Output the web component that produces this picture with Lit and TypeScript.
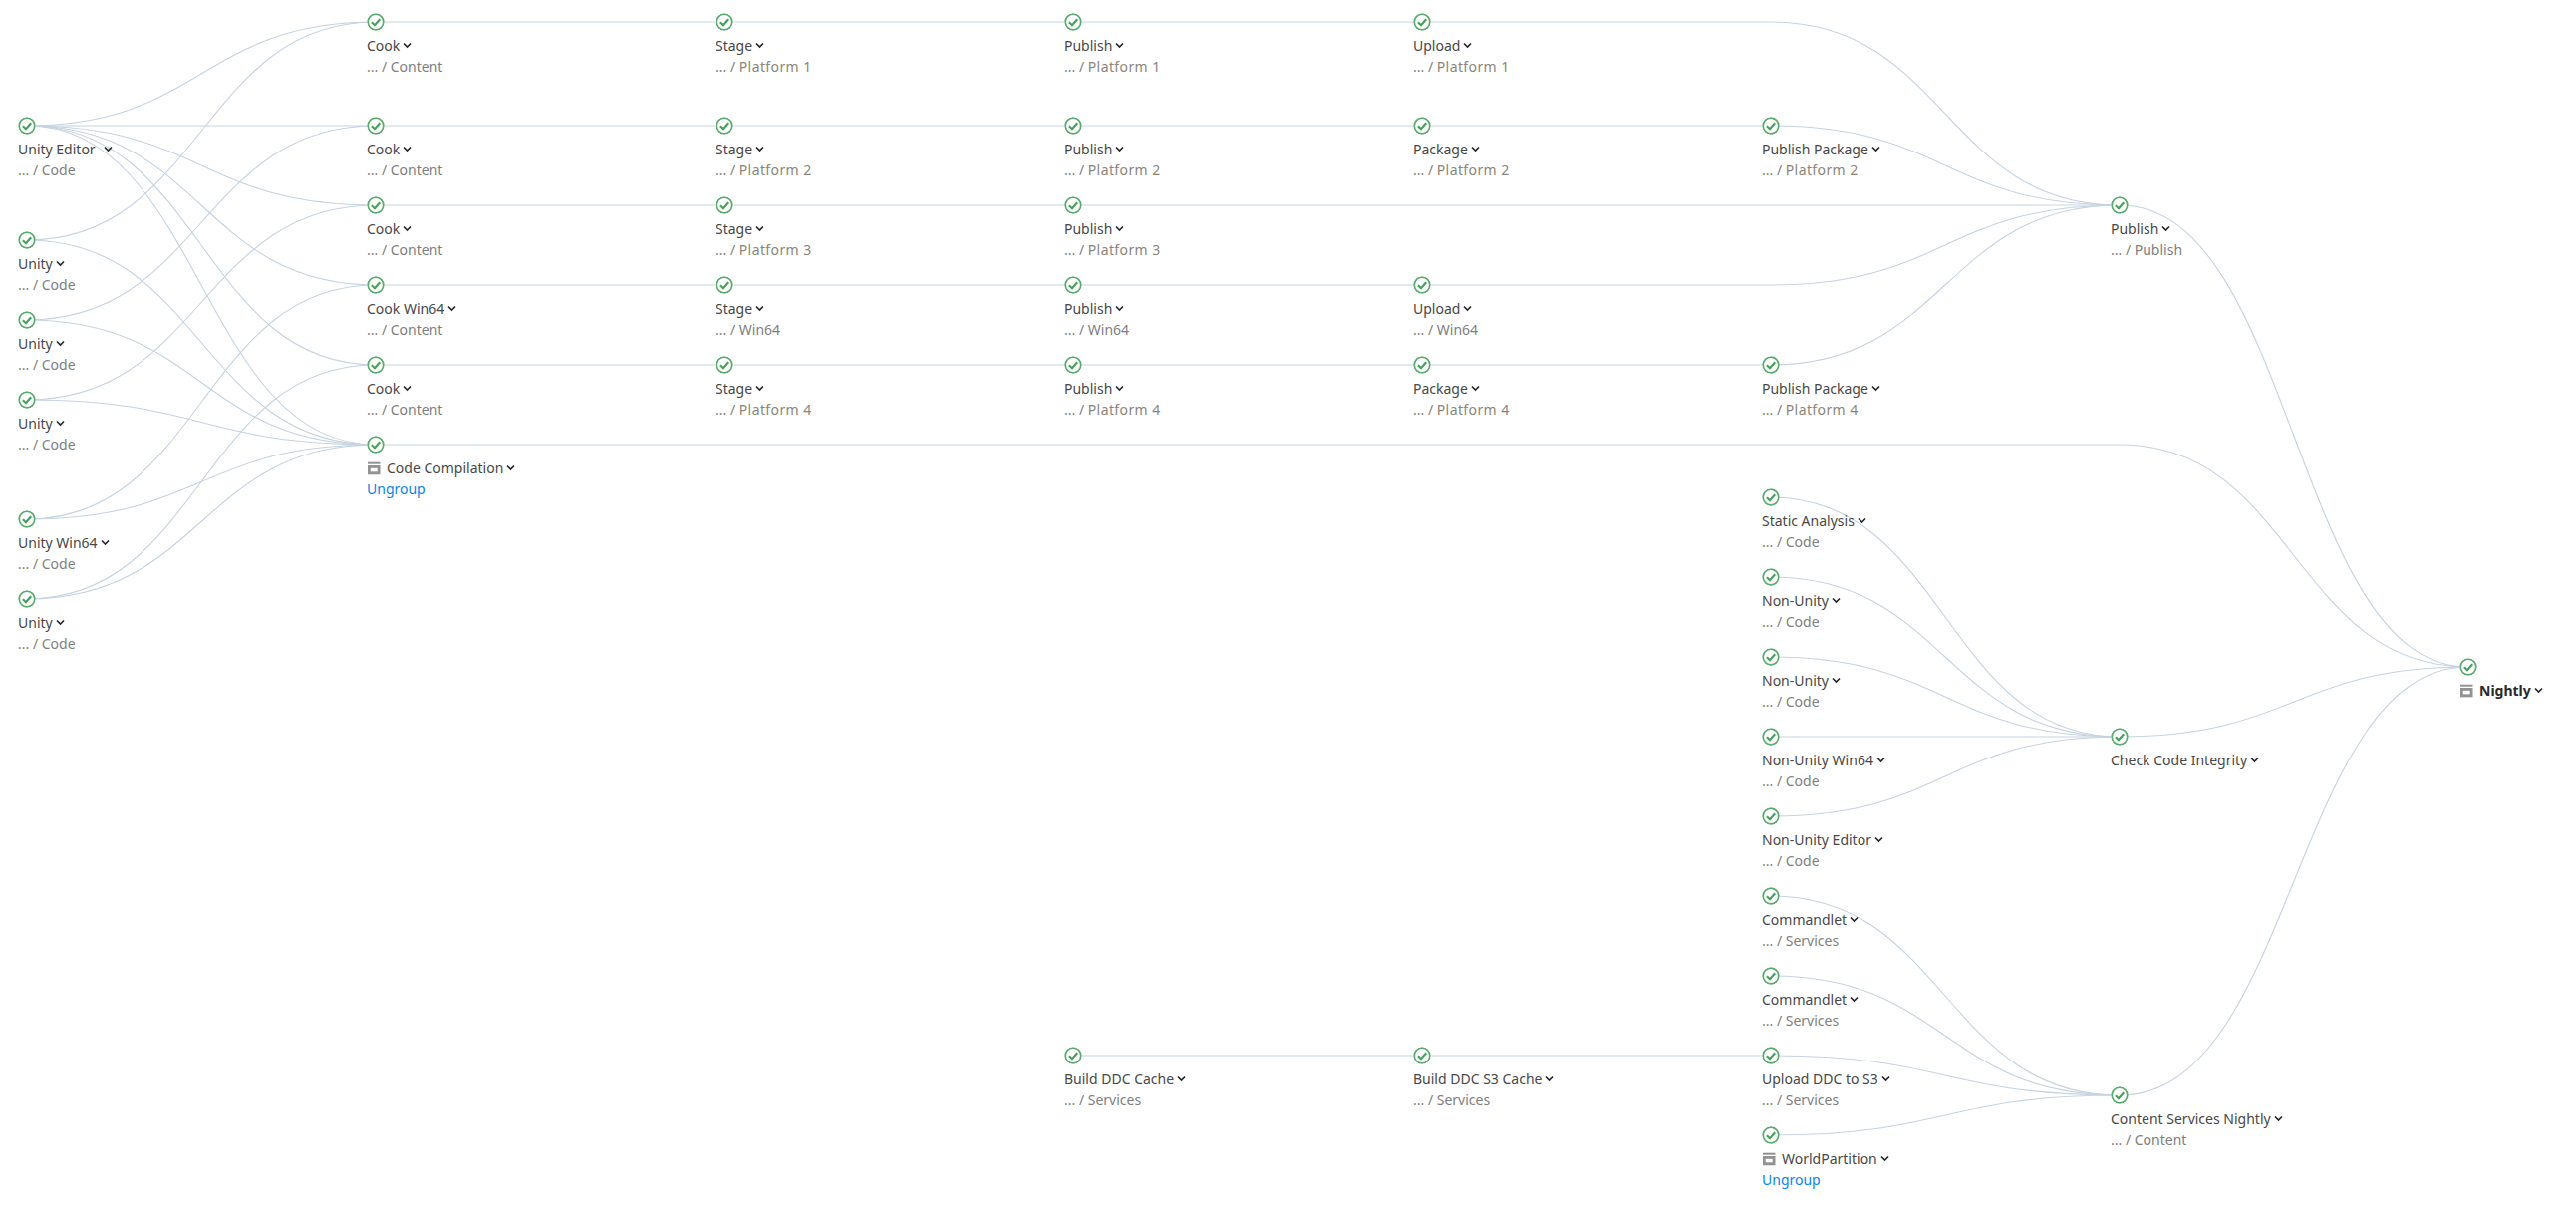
import { LitElement, html, css, svg } from "lit";
import { customElement } from "lit/decorators.js";

const COL0 = 27, COLW = 350;
type N = { id: string; c: number; y: number; t: string; s?: string; p?: string; g?: boolean; b?: boolean; w?: boolean };
const nodes: N[] = [
  { id: "ue", c: 0, y: 126, t: "Unity Editor", s: "Code", w: true },
  { id: "u1", c: 0, y: 241, t: "Unity", s: "Code" },
  { id: "u2", c: 0, y: 321, t: "Unity", s: "Code" },
  { id: "u3", c: 0, y: 401, t: "Unity", s: "Code" },
  { id: "uw", c: 0, y: 521, t: "Unity Win64", s: "Code" },
  { id: "u4", c: 0, y: 601, t: "Unity", s: "Code" },
  { id: "c1", c: 1, y: 22, t: "Cook", s: "Content" },
  { id: "c2", c: 1, y: 126, t: "Cook", s: "Content" },
  { id: "c3", c: 1, y: 206, t: "Cook", s: "Content" },
  { id: "cw", c: 1, y: 286, t: "Cook Win64", s: "Content" },
  { id: "c4", c: 1, y: 366, t: "Cook", s: "Content" },
  { id: "cc", c: 1, y: 446, t: "Code Compilation", g: true },
  { id: "s1", c: 2, y: 22, t: "Stage", p: "Platform 1" },
  { id: "s2", c: 2, y: 126, t: "Stage", p: "Platform 2" },
  { id: "s3", c: 2, y: 206, t: "Stage", p: "Platform 3" },
  { id: "sw", c: 2, y: 286, t: "Stage", s: "Win64" },
  { id: "s4", c: 2, y: 366, t: "Stage", p: "Platform 4" },
  { id: "p1", c: 3, y: 22, t: "Publish", p: "Platform 1" },
  { id: "p2", c: 3, y: 126, t: "Publish", p: "Platform 2" },
  { id: "p3", c: 3, y: 206, t: "Publish", p: "Platform 3" },
  { id: "pw", c: 3, y: 286, t: "Publish", s: "Win64" },
  { id: "p4", c: 3, y: 366, t: "Publish", p: "Platform 4" },
  { id: "dc", c: 3, y: 1059, t: "Build DDC Cache", s: "Services" },
  { id: "up1", c: 4, y: 22, t: "Upload", p: "Platform 1" },
  { id: "k2", c: 4, y: 126, t: "Package", p: "Platform 2" },
  { id: "upw", c: 4, y: 286, t: "Upload", s: "Win64" },
  { id: "k4", c: 4, y: 366, t: "Package", p: "Platform 4" },
  { id: "ds", c: 4, y: 1059, t: "Build DDC S3 Cache", s: "Services" },
  { id: "pp2", c: 5, y: 126, t: "Publish Package", p: "Platform 2" },
  { id: "pp4", c: 5, y: 366, t: "Publish Package", p: "Platform 4" },
  { id: "sa", c: 5, y: 499, t: "Static Analysis", s: "Code" },
  { id: "n1", c: 5, y: 579, t: "Non-Unity", s: "Code" },
  { id: "n2", c: 5, y: 659, t: "Non-Unity", s: "Code" },
  { id: "nw", c: 5, y: 739, t: "Non-Unity Win64", s: "Code" },
  { id: "ne", c: 5, y: 819, t: "Non-Unity Editor", s: "Code" },
  { id: "cm1", c: 5, y: 899, t: "Commandlet", s: "Services" },
  { id: "cm2", c: 5, y: 979, t: "Commandlet", s: "Services" },
  { id: "ud", c: 5, y: 1059, t: "Upload DDC to S3", s: "Services" },
  { id: "wp", c: 5, y: 1139, t: "WorldPartition", g: true },
  { id: "pub", c: 6, y: 206, t: "Publish", s: "Publish" },
  { id: "chk", c: 6, y: 739, t: "Check Code Integrity" },
  { id: "csn", c: 6, y: 1099, t: "Content Services Nightly", s: "Content" },
  { id: "ni", c: 7, y: 669, t: "Nightly", b: true },
];
const byId = new Map(nodes.map((n) => [n.id, n]));

const links: [string, string[]][] = [
  ["ue", ["c1", "c2", "c3", "cw", "c4", "cc"]],
  ["u1", ["c1", "cc"]],
  ["u2", ["c2", "cc"]],
  ["u3", ["c3", "cc"]],
  ["uw", ["cw", "cc"]],
  ["u4", ["c4", "cc"]],
  ["c1", ["s1"]], ["s1", ["p1"]], ["p1", ["up1"]], ["up1", ["pub"]],
  ["c2", ["s2"]], ["s2", ["p2"]], ["p2", ["k2"]], ["k2", ["pp2"]], ["pp2", ["pub"]],
  ["c3", ["s3"]], ["s3", ["p3"]], ["p3", ["pub"]],
  ["cw", ["sw"]], ["sw", ["pw"]], ["pw", ["upw"]], ["upw", ["pub"]],
  ["c4", ["s4"]], ["s4", ["p4"]], ["p4", ["k4"]], ["k4", ["pp4"]], ["pp4", ["pub"]],
  ["cc", ["ni"]],
  ["pub", ["ni"]], ["chk", ["ni"]], ["csn", ["ni"]],
  ["sa", ["chk"]], ["n1", ["chk"]], ["n2", ["chk"]], ["nw", ["chk"]], ["ne", ["chk"]],
  ["cm1", ["csn"]], ["cm2", ["csn"]], ["ud", ["csn"]], ["wp", ["csn"]],
  ["dc", ["ds"]], ["ds", ["ud"]],
];

function edgePath(a: N, b: N): string {
  const x1 = COL0 + a.c * COLW;
  const x2 = COL0 + b.c * COLW;
  const xs = b.c - a.c > 1 ? x2 - COLW : x1; // long edges run flat until the last column
  const mx = (xs + x2) / 2;
  return `M${x1} ${a.y}L${xs} ${a.y}C${mx} ${a.y} ${mx} ${b.y} ${x2} ${b.y}`;
}

@customElement("app-root")
export class AppRoot extends LitElement {
  static styles = css`
    :host {
      display: block;
      background: #fff;
      font-family: "Noto Sans", "Open Sans", sans-serif;
      font-size: 14px;
      line-height: 21px;
    }
    .canvas {
      position: relative;
      width: 2585px;
      height: 1217px;
      overflow: hidden;
    }
    .edges {
      position: absolute;
      inset: 0;
    }
    .edges path {
      fill: none;
      stroke: #c6d3e0;
      stroke-width: 1.1;
    }
    .node {
      position: absolute;
      display: flex;
      flex-direction: column;
      white-space: nowrap;
    }
    .status {
      display: block;
      width: 18px;
      height: 18px;
      margin-bottom: 4px;
      background: #fff;
      border-radius: 50%;
    }
    .title {
      display: flex;
      align-items: center;
      color: #484848;
      height: 21px;
    }
    .title.bold {
      font-weight: 700;
      color: #2a2a2a;
    }
    .chev {
      margin-left: 3px;
      flex: none;
    }
    .chev.wide {
      margin-left: 8px;
    }
    .group {
      margin-right: 6px;
      flex: none;
    }
    .sub {
      color: #808080;
      height: 21px;
    }
    .plat {
      color: #8a867a;
      letter-spacing: 0.4px;
    }
    .link {
      color: #0a84e6;
      height: 21px;
    }
  `;

  private renderNode(n: N) {
    const style = `left:${18 + n.c * COLW}px;top:${n.y - 9}px`;
    return html`<div class="node" style=${style}>
      <svg class="status" viewBox="0 0 18 18">
        <circle cx="9" cy="9" r="7.8" fill="#fff" stroke="#5aac6e" stroke-width="1.8"></circle>
        <path d="M4.9 9.2 8 12.2 13.2 6.2" fill="none" stroke="#46a05f" stroke-width="2.2"></path>
      </svg>
      <div class="title ${n.b ? "bold" : ""}">
        ${n.g || n.b
          ? html`<svg class="group" width="14" height="14" viewBox="0 0 14 14">
              <rect x="1" y="0.7" width="12.5" height="2" fill="#929292"></rect>
              <rect x="1" y="4" width="12.5" height="9.3" fill="#929292"></rect>
              <rect x="3.7" y="6.8" width="7" height="3.5" fill="#fff"></rect>
            </svg>`
          : ""}
        <span>${n.t}</span>
        <svg class="chev ${n.w ? "wide" : ""}" width="9" height="7" viewBox="0 0 9 7">
          <path d="M1 1.5 4.5 5 8 1.5" fill="none" stroke="#26282b" stroke-width="1.7"></path>
        </svg>
      </div>
      ${n.s ? html`<div class="sub">... / ${n.s}</div>` : ""}
      ${n.p ? html`<div class="sub">... / <span class="plat">${n.p}</span></div>` : ""}
      ${n.g ? html`<div class="link">Ungroup</div>` : ""}
    </div>`;
  }

  render() {
    const paths = links.flatMap(([f, ts]) =>
      ts.map((t) => svg`<path d=${edgePath(byId.get(f)!, byId.get(t)!)}></path>`)
    );
    return html`<div class="canvas">
      <svg class="edges" width="2585" height="1217">${paths}</svg>
      ${nodes.map((n) => this.renderNode(n))}
    </div>`;
  }
}
